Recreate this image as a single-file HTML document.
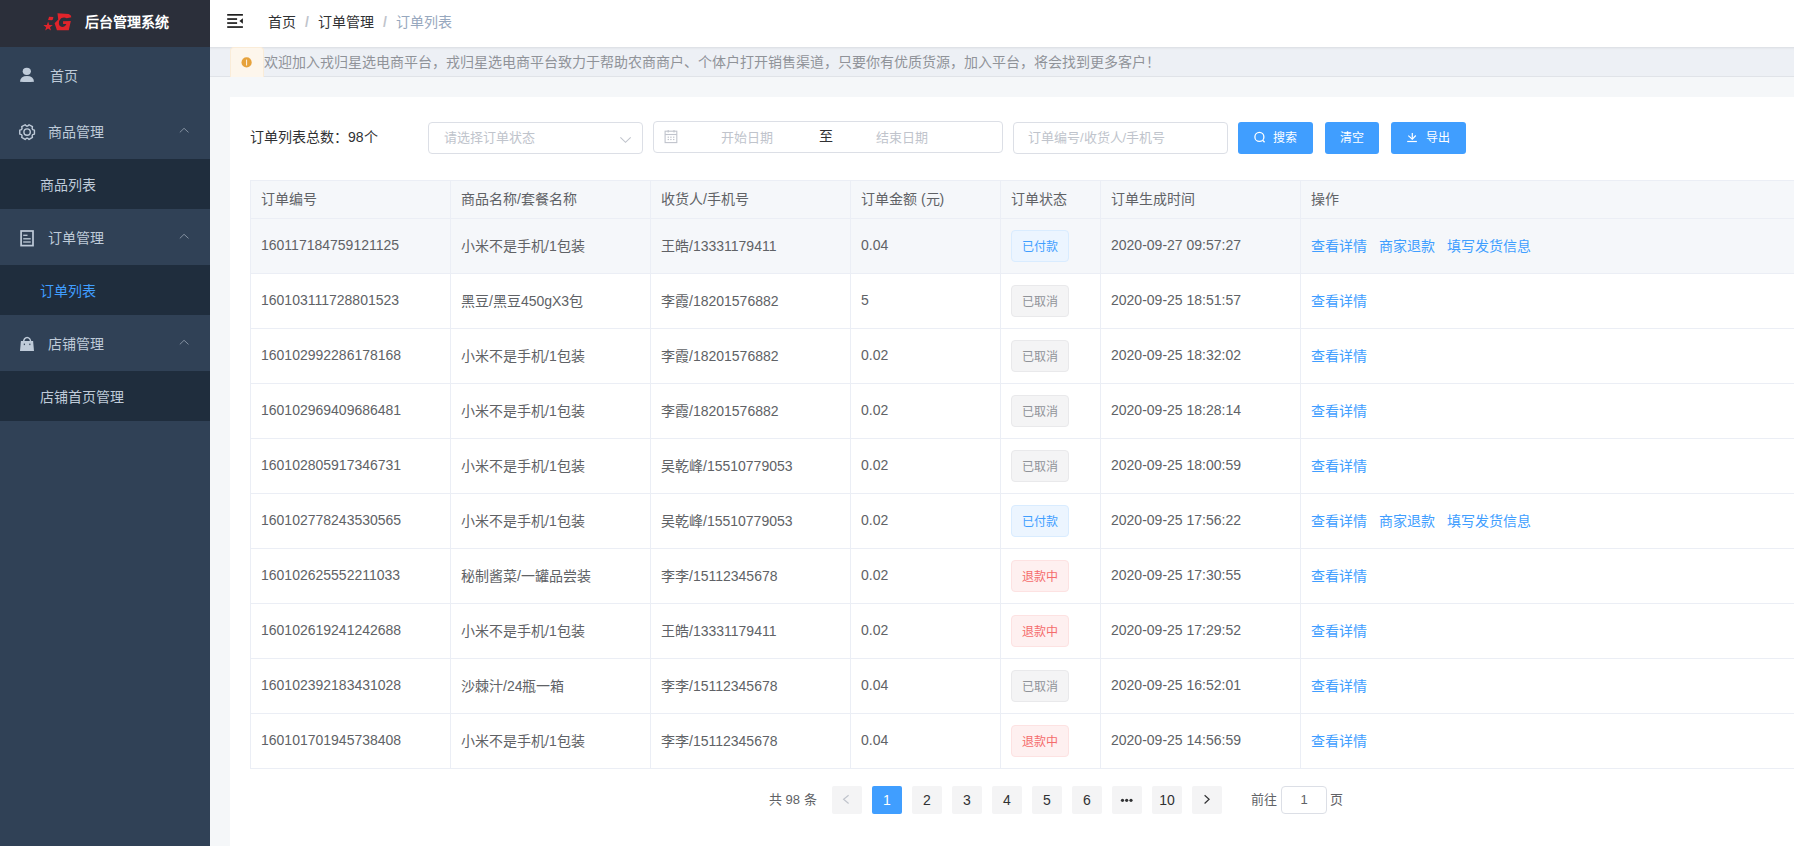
<!DOCTYPE html>
<html lang="zh-CN"><head><meta charset="utf-8">
<style>
*{box-sizing:border-box;margin:0;padding:0}
html,body{width:1794px;height:846px;overflow:hidden;background:#f5f7f9;font-family:"Liberation Sans",sans-serif;font-size:14px;color:#606266}
.abs{position:absolute}
#side{position:absolute;left:0;top:0;width:210px;height:846px;background:#304156}
#logo{position:absolute;left:0;top:0;width:210px;height:47px;background:#2b2f3a}
#logo .t{position:absolute;left:85px;top:13px;color:#fff;font-weight:bold;font-size:14px;line-height:18px}
.mi{position:absolute;left:0;width:210px;height:56px;color:#bfcbd9}
.mi .tx{position:absolute;top:20px;line-height:18px}
.mi .ar{position:absolute;left:180px;top:126px}
.sub{position:absolute;left:0;width:210px;height:50px;background:#1f2d3d;color:#bfcbd9}
.sub .tx{position:absolute;left:40px;top:17px;line-height:18px}
#nav{position:absolute;left:210px;top:0;width:1584px;height:47px;background:#fff}
#notice{position:absolute;left:210px;top:47px;width:1584px;height:30px;background:#edf0f5;border-top:1px solid #dfe2e7;border-bottom:1px solid #e0e3e8;box-shadow:inset 0 2px 2px -1px rgba(0,0,0,0.04)}
#card{position:absolute;left:230px;top:97px;width:1564px;height:749px;background:#fff}
.inp{position:absolute;border:1px solid #dcdfe6;border-radius:4px;background:#fff}
.ph{position:absolute;color:#c0c4cc;font-size:13px;line-height:16px}
.btn{position:absolute;top:122px;height:32px;background:#409eff;border-radius:3px;color:#fff;font-size:12px}
table{position:absolute;left:250px;top:180px;width:1650px;border-collapse:collapse;table-layout:fixed}
td,th{border:1px solid #ebeef5;text-align:left;font-weight:normal;padding:0 0 0 10px;white-space:nowrap;vertical-align:middle}
th{height:38px;background:#f5f7fa;color:#606266;padding-bottom:3px}
td{height:55px;padding-bottom:2px}
tr.hv td{background:#f5f7fa}
.tag{display:inline-block;position:relative;top:1px;height:32px;line-height:32px;padding:0 10px;font-size:12px;border:1px solid;border-radius:4px}
.tg{background:#f4f4f5;border-color:#e9e9eb;color:#909399}
.tb{background:#ecf5ff;border-color:#d9ecff;color:#409eff}
.tr{background:#fef0f0;border-color:#fde2e2;color:#f56c6c}
.lk{color:#409eff;margin-right:12px}
.pg{position:absolute;top:786px;width:30px;height:28px;background:#f4f4f5;border-radius:2px;color:#303133;font-size:14px;text-align:center;line-height:28px}
</style></head><body>
<div id="side">
  <div id="logo">
    <svg class="abs" style="left:38px;top:8px" width="40" height="28" viewBox="0 0 1209 846"><g fill="#e0242b">
<polygon points="305,410 341,510 448,514 364,579 393,681 305,622 217,681 246,579 162,514 269,510"/>
<polygon points="335,265 465,275 450,345 415,370 305,365"/></g></svg><svg class="abs" style="left:52px;top:11px" width="22" height="22" viewBox="0 0 846 846"><path fill="#e0242b" d="M210,90 L640,115 Q740,150 745,240 L565,282 Q470,210 350,280 Q265,360 265,470 Q270,615 420,615 Q510,610 555,500 L425,500 L425,392 L725,380 L645,742 L190,745 L100,470 L240,330 Z"/></svg>
    <div class="t">后台管理系统</div>
  </div>
  <div class="mi" style="top:47px"><svg class="abs" style="left:18px;top:19px" width="18" height="18" viewBox="0 0 18 18"><ellipse cx="8.8" cy="5.3" rx="4.1" ry="3.6" fill="#bfcbd9"/><path d="M2,15.8 Q2.3,10 9,10 Q15.7,10 16,15.8 Q9,16.2 2,15.8Z" fill="#bfcbd9"/></svg><div class="tx" style="left:50px">首页</div></div>
  <div class="mi" style="top:103px"><svg class="abs" style="left:18px;top:20px" width="18" height="18" viewBox="0 0 18 18"><polygon points="16.44,7.13 16.44,11.07 14.76,11.62 14.12,12.74 14.47,14.47 11.07,16.44 9.75,15.27 8.45,15.27 7.13,16.44 3.73,14.47 4.08,12.74 3.44,11.62 1.76,11.07 1.76,7.13 3.44,6.58 4.08,5.46 3.73,3.73 7.13,1.76 8.45,2.93 9.75,2.93 11.07,1.76 14.47,3.73 14.12,5.46 14.76,6.58" fill="none" stroke="#bfcbd9" stroke-width="1.4" stroke-linejoin="round"/><circle cx="9.1" cy="9.1" r="3.2" fill="none" stroke="#bfcbd9" stroke-width="1.4"/></svg><div class="tx" style="left:48px">商品管理</div><svg class="abs" style="left:176px;top:22px" width="16" height="10" viewBox="0 0 16 10"><polyline points="3.8,7.4 8.05,3.3 12.5,7.4" fill="none" stroke="#8390a0" stroke-width="1"/></svg></div>
  <div class="sub" style="top:159px"><div class="tx">商品列表</div></div>
  <div class="mi" style="top:209px"><svg class="abs" style="left:18px;top:20px" width="18" height="18" viewBox="0 0 18 18"><rect x="3.1" y="2" width="11.9" height="14.6" fill="none" stroke="#bfcbd9" stroke-width="1.7"/><line x1="5.2" y1="6.3" x2="9.5" y2="6.3" stroke="#bfcbd9" stroke-width="1.3"/><line x1="5.2" y1="9.8" x2="12.7" y2="9.8" stroke="#bfcbd9" stroke-width="1.3"/><line x1="5.2" y1="13" x2="12.7" y2="13" stroke="#bfcbd9" stroke-width="1.3"/></svg><div class="tx" style="left:48px">订单管理</div><svg class="abs" style="left:176px;top:22px" width="16" height="10" viewBox="0 0 16 10"><polyline points="3.8,7.4 8.05,3.3 12.5,7.4" fill="none" stroke="#8390a0" stroke-width="1"/></svg></div>
  <div class="sub" style="top:265px"><div class="tx" style="color:#409eff">订单列表</div></div>
  <div class="mi" style="top:315px"><svg class="abs" style="left:18px;top:19px" width="18" height="18" viewBox="0 0 18 18"><path d="M5.6,8 A3.5,4.5 0 0 1 12.6,8" fill="none" stroke="#bfcbd9" stroke-width="1.5"/><path d="M2.9,6.9 L15.1,6.9 L16,17 L2,17 Z" fill="#bfcbd9"/><rect x="5.8" y="9.6" width="1.1" height="1.5" fill="#304156"/><rect x="11.3" y="9.6" width="1.1" height="1.5" fill="#304156"/></svg><div class="tx" style="left:48px">店铺管理</div><svg class="abs" style="left:176px;top:22px" width="16" height="10" viewBox="0 0 16 10"><polyline points="3.8,7.4 8.05,3.3 12.5,7.4" fill="none" stroke="#8390a0" stroke-width="1"/></svg></div>
  <div class="sub" style="top:371px"><div class="tx">店铺首页管理</div></div>
</div>
<div id="nav"><svg class="abs" style="left:16px;top:10px" width="20" height="20" viewBox="0 0 20 20"><g fill="#1f1f1f"><rect x="1.2" y="4" width="15.7" height="1.7"/><rect x="1.2" y="8.2" width="9.9" height="1.7"/><rect x="1.2" y="12.2" width="9.9" height="1.7"/><rect x="1.2" y="16.2" width="15.7" height="1.7"/><polygon points="13.4,10.9 16.9,8.2 16.9,13.7"/></g></svg>
  <div class="abs" style="left:58px;top:13px;line-height:18px;color:#303133">首页<span style="color:#c0c4cc;margin:0 9px;font-weight:bold">/</span>订单管理<span style="color:#c0c4cc;margin:0 9px;font-weight:bold">/</span><span style="color:#97a8be">订单列表</span></div>
</div>
<div id="notice">
  <div class="abs" style="left:20px;top:-1px;width:34px;height:30px;background:#fdf6ec;border:1px solid #faecd8;border-bottom:0;border-radius:4px 4px 0 0"><svg class="abs" style="left:9px;top:8px" width="14" height="14" viewBox="0 0 14 14"><circle cx="6.6" cy="6.4" r="5.1" fill="#e6a23c"/><rect x="6.1" y="3.6" width="1" height="5.9" fill="#fdf6ec"/></svg></div>
  <div class="abs" style="left:54px;top:5px;line-height:18px;color:#909399">欢迎加入戎归星选电商平台，戎归星选电商平台致力于帮助农商商户、个体户打开销售渠道，只要你有优质货源，加入平台，将会找到更多客户！</div>
</div>
<div id="card"></div>
<div class="abs" style="left:250px;top:128px;line-height:18px;color:#303133">订单列表总数：98个</div>
<div class="inp" style="left:428px;top:122px;width:215px;height:32px"><div class="ph" style="left:15px;top:7px">请选择订单状态</div><svg class="abs" style="left:188px;top:11px" width="16" height="10" viewBox="0 0 16 10"><polyline points="3.4,3.3 8.5,8.3 13.7,3.3" fill="none" stroke="#c0c4cc" stroke-width="1.1"/></svg></div>
<div class="inp" style="left:653px;top:121px;width:350px;height:32px">
  <svg class="abs" style="left:7px;top:5px" width="20" height="20" viewBox="0 0 20 20"><g stroke="#c0c4cc" fill="none" stroke-width="1.1"><rect x="4.1" y="4.2" width="11.7" height="11.4"/><line x1="4.1" y1="7.5" x2="15.8" y2="7.5"/><line x1="7.2" y1="3" x2="7.2" y2="5.6"/><line x1="13" y1="3" x2="13" y2="5.6"/></g><g fill="#c0c4cc"><rect x="6.6" y="9.6" width="1.4" height="1.2"/><rect x="9.2" y="9.6" width="1.4" height="1.2"/><rect x="12" y="9.6" width="1.4" height="1.2"/><rect x="6.6" y="11.9" width="1.4" height="1.2"/><rect x="9.2" y="11.9" width="1.4" height="1.2"/><rect x="12" y="11.9" width="1.4" height="1.2"/></g></svg><div class="ph" style="left:67px;top:8px">开始日期</div>
  <div class="abs" style="left:165px;top:6px;color:#303133;font-size:14px;line-height:16px">至</div>
  <div class="ph" style="left:222px;top:8px">结束日期</div>
</div>
<div class="inp" style="left:1013px;top:122px;width:215px;height:32px"><div class="ph" style="left:14px;top:7px">订单编号/收货人/手机号</div></div>
<div class="btn" style="left:1238px;width:75px"><svg class="abs" style="left:12px;top:6px" width="20" height="20" viewBox="0 0 20 20"><circle cx="9.4" cy="8.9" r="4.5" fill="none" stroke="#fff" stroke-width="1.3"/><line x1="12.6" y1="12.3" x2="14.6" y2="14.3" stroke="#fff" stroke-width="1.3"/></svg><span class="abs" style="left:35px;top:8px;line-height:16px">搜索</span></div>
<div class="btn" style="left:1325px;width:54px"><span class="abs" style="left:15px;top:8px;line-height:16px">清空</span></div>
<div class="btn" style="left:1391px;width:75px"><svg class="abs" style="left:12px;top:6px" width="20" height="20" viewBox="0 0 20 20"><g stroke="#fff" fill="none" stroke-width="1.2"><line x1="9.3" y1="5.1" x2="9.3" y2="11.2"/><polyline points="5.3,7.6 9.3,11.1 12.8,7.5"/><line x1="4.2" y1="13.5" x2="13.9" y2="13.5"/></g></svg><span class="abs" style="left:35px;top:8px;line-height:16px">导出</span></div>

<table>
<colgroup><col style="width:200px"><col style="width:200px"><col style="width:200px"><col style="width:150px"><col style="width:100px"><col style="width:200px"><col style="width:600px"></colgroup>
<tr><th>订单编号</th><th>商品名称/套餐名称</th><th>收货人/手机号</th><th>订单金额 (元)</th><th>订单状态</th><th>订单生成时间</th><th>操作</th></tr>
<tr class="hv"><td>160117184759121125</td><td>小米不是手机/1包装</td><td>王皓/13331179411</td><td>0.04</td><td><span class="tag tb">已付款</span></td><td>2020-09-27 09:57:27</td><td><span class="lk">查看详情</span><span class="lk">商家退款</span><span class="lk">填写发货信息</span></td></tr>
<tr><td>160103111728801523</td><td>黑豆/黑豆450gX3包</td><td>李霞/18201576882</td><td>5</td><td><span class="tag tg">已取消</span></td><td>2020-09-25 18:51:57</td><td><span class="lk">查看详情</span></td></tr>
<tr><td>160102992286178168</td><td>小米不是手机/1包装</td><td>李霞/18201576882</td><td>0.02</td><td><span class="tag tg">已取消</span></td><td>2020-09-25 18:32:02</td><td><span class="lk">查看详情</span></td></tr>
<tr><td>160102969409686481</td><td>小米不是手机/1包装</td><td>李霞/18201576882</td><td>0.02</td><td><span class="tag tg">已取消</span></td><td>2020-09-25 18:28:14</td><td><span class="lk">查看详情</span></td></tr>
<tr><td>160102805917346731</td><td>小米不是手机/1包装</td><td>吴乾峰/15510779053</td><td>0.02</td><td><span class="tag tg">已取消</span></td><td>2020-09-25 18:00:59</td><td><span class="lk">查看详情</span></td></tr>
<tr><td>160102778243530565</td><td>小米不是手机/1包装</td><td>吴乾峰/15510779053</td><td>0.02</td><td><span class="tag tb">已付款</span></td><td>2020-09-25 17:56:22</td><td><span class="lk">查看详情</span><span class="lk">商家退款</span><span class="lk">填写发货信息</span></td></tr>
<tr><td>160102625552211033</td><td>秘制酱菜/一罐品尝装</td><td>李李/15112345678</td><td>0.02</td><td><span class="tag tr">退款中</span></td><td>2020-09-25 17:30:55</td><td><span class="lk">查看详情</span></td></tr>
<tr><td>160102619241242688</td><td>小米不是手机/1包装</td><td>王皓/13331179411</td><td>0.02</td><td><span class="tag tr">退款中</span></td><td>2020-09-25 17:29:52</td><td><span class="lk">查看详情</span></td></tr>
<tr><td>160102392183431028</td><td>沙棘汁/24瓶一箱</td><td>李李/15112345678</td><td>0.04</td><td><span class="tag tg">已取消</span></td><td>2020-09-25 16:52:01</td><td><span class="lk">查看详情</span></td></tr>
<tr><td>160101701945738408</td><td>小米不是手机/1包装</td><td>李李/15112345678</td><td>0.04</td><td><span class="tag tr">退款中</span></td><td>2020-09-25 14:56:59</td><td><span class="lk">查看详情</span></td></tr>
</table>

<div class="abs" style="left:769px;top:791px;font-size:13px;line-height:18px;color:#606266">共 98 条</div>
<div class="pg" style="left:832px;color:#c0c4cc"><svg class="abs" style="left:0;top:0" width="30" height="28" viewBox="0 0 30 28"><polyline points="16.6,9.2 11.6,13.3 16.6,17.5" fill="none" stroke="#c0c4cc" stroke-width="1.2"/></svg></div>
<div class="pg" style="left:872px;background:#409eff;color:#fff">1</div>
<div class="pg" style="left:912px">2</div>
<div class="pg" style="left:952px">3</div>
<div class="pg" style="left:992px">4</div>
<div class="pg" style="left:1032px">5</div>
<div class="pg" style="left:1072px">6</div>
<div class="pg" style="left:1112px"><svg class="abs" style="left:0;top:0" width="30" height="28" viewBox="0 0 30 28"><g fill="#303133"><circle cx="10.5" cy="14.3" r="1.6"/><circle cx="14.7" cy="14.3" r="1.6"/><circle cx="19" cy="14.3" r="1.6"/></g></svg></div>
<div class="pg" style="left:1152px">10</div>
<div class="pg" style="left:1192px"><svg class="abs" style="left:0;top:0" width="30" height="28" viewBox="0 0 30 28"><polyline points="12.6,9.2 17.1,13.3 12.6,17.5" fill="none" stroke="#303133" stroke-width="1.2"/></svg></div>
<div class="abs" style="left:1251px;top:791px;font-size:13px;line-height:18px">前往</div>
<div class="inp" style="left:1281px;top:786px;width:46px;height:28px;text-align:center;line-height:26px;font-size:13px">1</div>
<div class="abs" style="left:1330px;top:791px;font-size:13px;line-height:18px">页</div>
</body></html>
